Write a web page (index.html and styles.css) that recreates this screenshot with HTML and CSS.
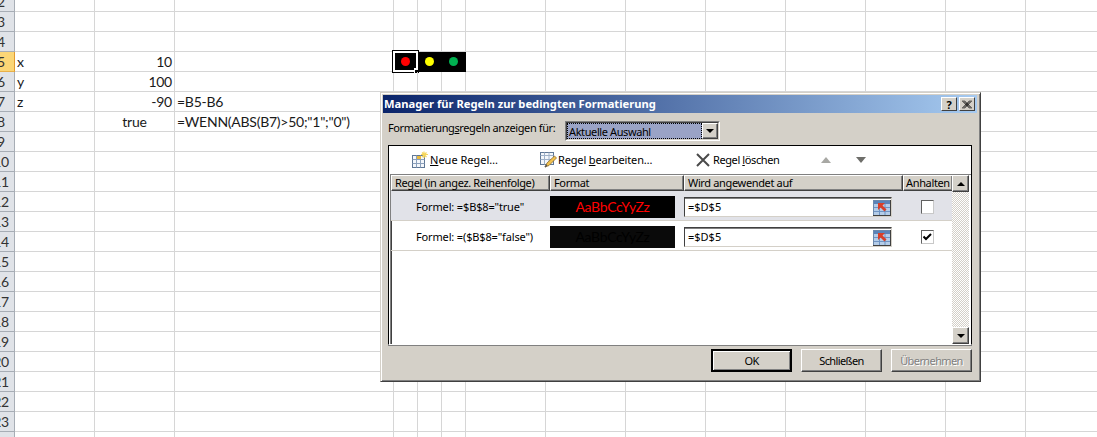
FILE: index.html
```html
<!DOCTYPE html>
<html lang="de">
<head>
<meta charset="utf-8">
<title>Manager für Regeln</title>
<link rel="stylesheet" href="styles.css">
</head>
<body>
<div class="sheet">
  <div class="row"><div class="hd"><span>2</span></div><div class="a"></div><div class="b"></div><div class="c"></div><div class="d"></div><div class="d"></div><div class="d"></div><div class="rest"></div></div>
  <div class="row"><div class="hd"><span>3</span></div><div class="a"></div><div class="b"></div><div class="c"></div><div class="d"></div><div class="d"></div><div class="d"></div><div class="rest"></div></div>
  <div class="row"><div class="hd"><span>4</span></div><div class="a"></div><div class="b"></div><div class="c"></div><div class="d"></div><div class="d"></div><div class="d"></div><div class="rest"></div></div>
  <div class="row"><div class="hd active"><span>5</span></div><div class="a">x</div><div class="b num">10</div><div class="c"></div>
    <div class="d light"><i class="dot red"></i><div class="selection"><div class="handle"></div></div></div><div class="d light"><i class="dot yellow"></i></div><div class="d light"><i class="dot green"></i></div><div class="rest"></div></div>
  <div class="row"><div class="hd"><span>6</span></div><div class="a">y</div><div class="b num">100</div><div class="c"></div><div class="d"></div><div class="d"></div><div class="d"></div><div class="rest"></div></div>
  <div class="row"><div class="hd"><span>7</span></div><div class="a">z</div><div class="b num">-90</div><div class="c">=B5-B6</div><div class="d"></div><div class="d"></div><div class="d"></div><div class="rest"></div></div>
  <div class="row"><div class="hd"><span>8</span></div><div class="a"></div><div class="b mid">true</div><div class="c">=WENN(ABS(B7)&gt;50;"1";"0")</div><div class="d"></div><div class="d"></div><div class="d"></div><div class="rest"></div></div>
  <div class="row"><div class="hd"><span>9</span></div><div class="a"></div><div class="b"></div><div class="c"></div><div class="d"></div><div class="d"></div><div class="d"></div><div class="rest"></div></div>
  <div class="row"><div class="hd"><span>10</span></div><div class="a"></div><div class="b"></div><div class="c"></div><div class="d"></div><div class="d"></div><div class="d"></div><div class="rest"></div></div>
  <div class="row"><div class="hd"><span>11</span></div><div class="a"></div><div class="b"></div><div class="c"></div><div class="d"></div><div class="d"></div><div class="d"></div><div class="rest"></div></div>
  <div class="row"><div class="hd"><span>12</span></div><div class="a"></div><div class="b"></div><div class="c"></div><div class="d"></div><div class="d"></div><div class="d"></div><div class="rest"></div></div>
  <div class="row"><div class="hd"><span>13</span></div><div class="a"></div><div class="b"></div><div class="c"></div><div class="d"></div><div class="d"></div><div class="d"></div><div class="rest"></div></div>
  <div class="row"><div class="hd"><span>14</span></div><div class="a"></div><div class="b"></div><div class="c"></div><div class="d"></div><div class="d"></div><div class="d"></div><div class="rest"></div></div>
  <div class="row"><div class="hd"><span>15</span></div><div class="a"></div><div class="b"></div><div class="c"></div><div class="d"></div><div class="d"></div><div class="d"></div><div class="rest"></div></div>
  <div class="row"><div class="hd"><span>16</span></div><div class="a"></div><div class="b"></div><div class="c"></div><div class="d"></div><div class="d"></div><div class="d"></div><div class="rest"></div></div>
  <div class="row"><div class="hd"><span>17</span></div><div class="a"></div><div class="b"></div><div class="c"></div><div class="d"></div><div class="d"></div><div class="d"></div><div class="rest"></div></div>
  <div class="row"><div class="hd"><span>18</span></div><div class="a"></div><div class="b"></div><div class="c"></div><div class="d"></div><div class="d"></div><div class="d"></div><div class="rest"></div></div>
  <div class="row"><div class="hd"><span>19</span></div><div class="a"></div><div class="b"></div><div class="c"></div><div class="d"></div><div class="d"></div><div class="d"></div><div class="rest"></div></div>
  <div class="row"><div class="hd"><span>20</span></div><div class="a"></div><div class="b"></div><div class="c"></div><div class="d"></div><div class="d"></div><div class="d"></div><div class="rest"></div></div>
  <div class="row"><div class="hd"><span>21</span></div><div class="a"></div><div class="b"></div><div class="c"></div><div class="d"></div><div class="d"></div><div class="d"></div><div class="rest"></div></div>
  <div class="row"><div class="hd"><span>22</span></div><div class="a"></div><div class="b"></div><div class="c"></div><div class="d"></div><div class="d"></div><div class="d"></div><div class="rest"></div></div>
  <div class="row"><div class="hd"><span>23</span></div><div class="a"></div><div class="b"></div><div class="c"></div><div class="d"></div><div class="d"></div><div class="d"></div><div class="rest"></div></div>
  <div class="row"><div class="hd"><span>24</span></div><div class="a"></div><div class="b"></div><div class="c"></div><div class="d"></div><div class="d"></div><div class="d"></div><div class="rest"></div></div>
</div>

<section class="dialog">
  <header class="titlebar">
    <h1>Manager für Regeln zur bedingten Formatierung</h1>
    <div class="capbtns">
      <button class="capbtn">?</button>
      <button class="capbtn"><svg width="10" height="9" viewBox="0 0 10 9"><path d="M0 0.500 L8 8.500 M2 0.500 L10 8.500 M8 0.500 L0 8.500 M10 0.500 L2 8.500" stroke="#000" stroke-width="1" fill="none"/></svg></button>
    </div>
  </header>
  <div class="showfor">
    <label>Formatierung<u>s</u>regeln anzeigen für:</label>
    <div class="combo">
      <div class="combo-inner">
        <div class="combo-val"><span>Aktuelle Auswahl</span></div>
        <div class="raised combo-btn"><i class="arrow-d black"></i></div>
      </div>
    </div>
  </div>
  <div class="panel">
    <div class="toolbar">
      <div class="tool t1">
        <svg width="17" height="18" viewBox="0 0 17 18"><rect x="0.500" y="4.500" width="12" height="12" fill="#f4f7fb" stroke="#5f7795"/><path d="M4.500 4.500V16.500M8.500 4.500V16.500M0.500 8.500H12.500M0.500 12.500H12.500" stroke="#8ba0bb"/><rect x="5" y="5" width="4" height="3" fill="#e8b83c"/><path d="M12 0.500V7M9 3.500H16M10 1.500L14.500 6M14.500 1.500L10 6" stroke="#f6d65a" stroke-width="1.200"/></svg>
        <span><u>N</u>eue Regel…</span>
      </div>
      <div class="tool t2">
        <svg width="18" height="18" viewBox="0 0 18 18"><rect x="0.500" y="1.500" width="13" height="12" fill="#f4f7fb" stroke="#5f7795"/><path d="M0.500 4.500H13.500M0.500 8.500H13.500M4.500 1.500V13.500M9 1.500V13.500" stroke="#9fb1c8"/><path d="M5 16 L7 12 L14.500 5 L16.500 7 L9 14.500 Z" fill="#f2c14e" stroke="#8a6a2c" stroke-width="0.800"/><path d="M5 16 L7 14" stroke="#555" stroke-width="1.200"/></svg>
        <span>Regel <u>b</u>earbeiten…</span>
      </div>
      <div class="tool t3">
        <svg width="14" height="14" viewBox="0 0 14 14"><path d="M1 1 L13 13 M13 1 L1 13" stroke="#4a4a4a" stroke-width="2" fill="none"/></svg>
        <span>Regel <u>l</u>öschen</span>
      </div>
      <div class="moves">
        <i class="arrow-u grey"></i>
        <i class="arrow-d grey big"></i>
      </div>
    </div>
    <div class="list">
      <div class="listmain">
        <div class="heads">
          <div class="raised head h1">Regel (in angez. Reihenfolge)</div>
          <div class="raised head h2">Format</div>
          <div class="raised head h3">Wird angewendet auf</div>
          <div class="raised head h4">Anhalten</div>
        </div>
        <div class="rule on">
          <div class="rname">Formel: =$B$8="true"</div>
          <div class="swatch red-t">AaBbCcYyZz</div>
          <div class="refbox">
            <span>=$D$5</span>
            <div class="refbtn"><svg width="18" height="16" viewBox="0 0 18 16"><rect x="0.500" y="0.500" width="17" height="15" fill="#b4cce8" stroke="#6d89ad"/><rect x="1" y="1" width="16" height="3" fill="#5a83b8"/><path d="M1 7.500H17M1 11.500H17M6.500 4V15M12 4V15" stroke="#6f94c4"/><path d="M5 3 L12 3 L9.500 5.500 L13.500 9.500 L11.500 11.500 L7.500 7.500 L5 10 Z" fill="#d8402a"/><path d="M0 15.500H18M17.500 0V16" stroke="#404040"/></svg></div>
          </div>
          <div class="stop"><div class="check"></div></div>
        </div>
        <div class="rule">
          <div class="rname">Formel: =($B$8="false")</div>
          <div class="swatch dark-t">AaBbCcYyZz</div>
          <div class="refbox">
            <span>=$D$5</span>
            <div class="refbtn"><svg width="18" height="16" viewBox="0 0 18 16"><rect x="0.500" y="0.500" width="17" height="15" fill="#b4cce8" stroke="#6d89ad"/><rect x="1" y="1" width="16" height="3" fill="#5a83b8"/><path d="M1 7.500H17M1 11.500H17M6.500 4V15M12 4V15" stroke="#6f94c4"/><path d="M5 3 L12 3 L9.500 5.500 L13.500 9.500 L11.500 11.500 L7.500 7.500 L5 10 Z" fill="#d8402a"/><path d="M0 15.500H18M17.500 0V16" stroke="#404040"/></svg></div>
          </div>
          <div class="stop"><div class="check"><svg width="9" height="8" viewBox="0 0 9 8"><path d="M0.500 3.500 L3 6 L8 1" stroke="#000" stroke-width="2" fill="none"/></svg></div></div>
        </div>
      </div>
      <div class="scrollbar">
        <div class="raised sbtn"><i class="arrow-u black"></i></div>
        <div class="strack"></div>
        <div class="raised sbtn"><i class="arrow-d black"></i></div>
      </div>
    </div>
  </div>
  <div class="actions">
    <button class="btn default">OK</button>
    <button class="btn">Schließen</button>
    <button class="btn disabled">Übernehmen</button>
  </div>
</section>
</body>
</html>
```
FILE: styles.css
```css
* { box-sizing: border-box; }
html, body { margin: 0; padding: 0; height: 100%; overflow: hidden; background: #fff; }
body { position: relative; }

/* Spreadsheet */
.sheet { margin-top: -8px; font: 14px/20px Lato, "Open Sans", sans-serif; letter-spacing: -0.250px; color: #1a1a1a; }
.row { display: flex; height: 20px; }
.row > div { height: 20px; border-bottom: 1px solid #d6d6d6; flex: none; white-space: nowrap; }
.hd { width: 15px; padding-right: 12px; display: flex; justify-content: center; background: #e0e3e8; border-right: 1px solid #a7adb5; border-bottom-color: #a7adb5 !important; color: #333; }
.hd.active { background: #fbd676; border-right-color: #e29a2f; border-bottom-color: #e8b04a !important; }
.a, .b { width: 80px; border-right: 1px solid #d6d6d6; padding: 0 2px; }
.c { width: 219px; border-right: 1px solid #d6d6d6; padding: 0 2px; }
.d { width: 24px; border-right: 1px solid #d6d6d6; position: relative; }
.rest { flex: 1 1 auto !important; background: repeating-linear-gradient(to right, transparent 0, transparent 79px, #d6d6d6 79px, #d6d6d6 80px); }
.num { text-align: right; }
.mid { text-align: center; }
.light { background: #000; border-color: #000 !important; display: flex; align-items: center; justify-content: center; }
.dot { display: block; width: 9px; height: 9px; border-radius: 50%; margin-bottom: 1px; }
.red { background: #ff0000; }
.yellow { background: #ffff00; }
.green { background: #00b050; }
.selection { position: absolute; left: -1px; top: -1px; width: 25px; height: 21px; border: 2px solid #fff; outline: 1px solid #000; }
.handle { position: absolute; right: -4px; bottom: -3px; width: 6px; height: 5px; background: #000; border-top: 2px solid #fff; border-left: 1px solid #fff; border-right: 1px solid #fff; }

/* Dialog */
.dialog { position: absolute; left: 380px; top: 92px; width: 601px; height: 290px; background: #d4d0c8; border: 1px solid; border-color: #d4d0c8 #404040 #404040 #d4d0c8; box-shadow: inset 1px 1px 0 #fff, inset -1px -1px 0 #808080; padding: 2px 3px 3px 2px; font: 11px/14px "Noto Sans", "Open Sans", sans-serif; color: #000; display: flex; flex-direction: column; }
.titlebar { height: 18px; background: linear-gradient(to right, #0a246a, #a6caf0); display: flex; align-items: center; justify-content: space-between; padding: 0 2px 0 1px; flex: none; }
.titlebar h1 { margin: 0; font-size: 11.200px; font-weight: 700; color: #fff; white-space: nowrap; }
.capbtns { display: flex; gap: 2px; }
.capbtn { width: 16px; height: 14px; padding: 0; background: #d4d0c8; border: 1px solid; border-color: #fff #404040 #404040 #fff; font: 700 11px/11px "Noto Sans", sans-serif; color: #000; display: flex; align-items: center; justify-content: center; }
.showfor { height: 32px; flex: none; display: flex; align-items: center; padding: 4px 0 0 5px; }
.showfor label { width: 177px; flex: none; margin-top: -6px; white-space: nowrap; letter-spacing: -0.400px; }
.combo { width: 155px; height: 20px; flex: none; border: 1px solid; border-color: #808080 #fff #fff #808080; }
.combo-inner { height: 100%; border: 1px solid; border-color: #404040 #d4d0c8 #d4d0c8 #404040; display: flex; background: #fff; }
.combo-val { flex: 1; background: #9aa3c6; padding: 1px 0 0 1px; border: 1px dotted #000; color: #000; line-height: 14px; white-space: nowrap; letter-spacing: -0.400px; }
.raised { background: #d4d0c8; border: 1px solid; border-color: #fff #404040 #404040 #fff; box-shadow: inset -1px -1px 0 #808080; }
.combo-btn { width: 16px; flex: none; display: flex; align-items: center; justify-content: center; }
.arrow-d { display: block; width: 0; height: 0; border: 4px solid transparent; border-bottom-width: 0; border-top: 4px solid #000; }
.arrow-u { display: block; width: 0; height: 0; border: 4px solid transparent; border-top-width: 0; border-bottom: 4px solid #000; }
.arrow-d.grey { border-top-color: #6e6e6a; border-width: 6px 5px 0; }
.arrow-u.grey { border-bottom-color: #a8a8a4; border-width: 0 5px 6px; }

.panel { width: 584px; height: 200px; margin-left: 5px; flex: none; background: #fff; border: 1px solid #000; border-bottom: 1px solid #fff; box-shadow: 0 1px 0 #808080; display: flex; flex-direction: column; padding-left: 1px; }
.toolbar { height: 28px; flex: none; display: flex; align-items: center; }
.tool { display: flex; align-items: center; gap: 1px; white-space: nowrap; flex: none; }
.t1 { margin-left: 22px; width: 128px; }
.t2 { width: 156px; gap: 0; letter-spacing: -0.150px; }
.t3 { width: 125px; gap: 3px; letter-spacing: -0.400px; }
.moves { display: flex; align-items: center; gap: 25px; }
.list { flex: 1; display: flex; padding-right: 2px; border-top: 1px solid #808080; border-left: 1px solid #808080; min-height: 0; box-shadow: inset 1px 0 0 #404040; }
.listmain { flex: 1; display: flex; flex-direction: column; min-width: 0; }
.heads { display: flex; height: 16px; flex: none; }
.head { flex: none; padding: 0 0 0 3px; line-height: 14px; white-space: nowrap; overflow: hidden; letter-spacing: -0.350px; }
.h1 { width: 159px; }
.h2 { width: 134px; }
.h3 { width: 219px; }
.h4 { width: 50px; padding-left: 2px; }
.rule { height: 30px; flex: none; display: flex; align-items: center; padding-top: 3px; border-bottom: 1px solid #d4d0c8; }
.rule.on { background: #e1e2e8; }
.rname { width: 159px; flex: none; padding-left: 25px; white-space: nowrap; letter-spacing: -0.150px; }
.swatch { width: 125px; height: 22px; flex: none; margin-right: 9px; background: #000; font: 14px/22px Lato, "Open Sans", sans-serif; letter-spacing: -0.300px; text-align: center; }
.red-t { color: #f00; }
.dark-t { background: #0a0a0a; color: #000; }
.refbox { width: 208px; height: 20px; flex: none; display: flex; align-items: center; justify-content: space-between; background: #fff; border: 1px solid; border-color: #404040 #d4d0c8 #d4d0c8 #404040; box-shadow: inset 0 1px 0 #808080; padding: 0 0 0 3px; }
.refbtn { display: flex; margin-top: 1px; }
.stop { width: 71px; flex: none; padding-left: 29px; display: flex; }
.check { width: 13px; height: 14px; background: #fff; border: 1px solid; border-color: #606060 #c8c8c8 #c8c8c8 #606060; display: flex; align-items: center; justify-content: center; }
.scrollbar { width: 17px; flex: none; display: flex; flex-direction: column; }
.sbtn { height: 17px; flex: none; display: flex; align-items: center; justify-content: center; }
.strack { flex: 1; background-color: #fff; background-image: repeating-conic-gradient(#d4d0c8 0 25%, #fff 0 50%); background-size: 2px 2px; }

.actions { flex: 1; display: flex; justify-content: flex-end; gap: 9px; padding: 4px 5px 0 0; align-items: flex-start; }
.btn { width: 81px; height: 23px; padding: 0; background: #d4d0c8; border: 1px solid; border-color: #fff #404040 #404040 #fff; box-shadow: inset -1px -1px 0 #808080; font: 11px/14px "Noto Sans", "Open Sans", sans-serif; letter-spacing: -0.600px; color: #000; }
.btn.default { border: 2px solid #000; box-shadow: inset 1px 1px 0 #fff, inset -1px -1px 0 #808080; }
.btn.disabled { color: #808080; text-shadow: 1px 1px 0 #fff; }
```
